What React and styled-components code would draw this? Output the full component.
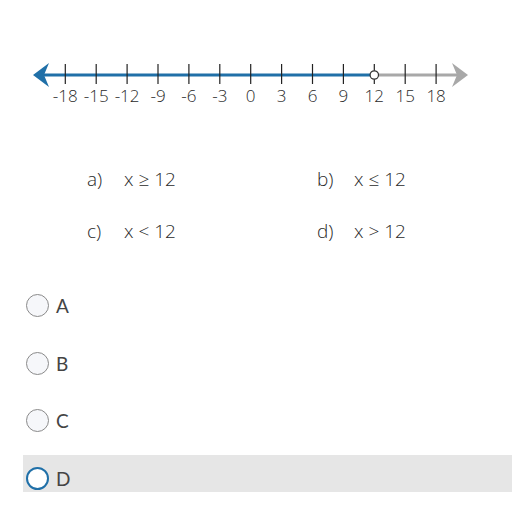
import React from 'react';
import styled, { createGlobalStyle } from 'styled-components';

const GlobalStyle = createGlobalStyle`
  body {
    margin: 0;
    background: #fff;
    font-family: "Open Sans", "DejaVu Sans", sans-serif;
    color: #333;
  }
`;

const BLUE = '#2070a8';
const GREY = '#a8a8a8';

const tickX = (v) => 250.7 + 30.9 * (v / 3);

const NumberLine = () => {
    const values = [-18, -15, -12, -9, -6, -3, 0, 3, 6, 9, 12, 15, 18];
    return (
        <LineSvg width="512" height="120" viewBox="0 0 512 120">
            <line x1="44" y1="75" x2={tickX(12)} y2="75" stroke={BLUE} strokeWidth="3" />
            <line x1={tickX(12)} y1="75" x2="458" y2="75" stroke={GREY} strokeWidth="3" />
            <path d="M33 75 L49 63 L44 75 L49 87 Z" fill={BLUE} />
            <path d="M468 75 L452 63 L457 75 L452 87 Z" fill={GREY} />
            {values.map((v) => (
                <g key={v}>
                    <line x1={tickX(v)} y1="64" x2={tickX(v)} y2="84" stroke="#222" strokeWidth="1.2" />
                    <TickLabel x={tickX(v)} y="102" textAnchor="middle">
                        {v < 0 ? `-${-v}` : v}
                    </TickLabel>
                </g>
            ))}
            <circle cx={tickX(12)} cy="75" r="4.2" fill="#fff" stroke="#333" strokeWidth="1.2" />
        </LineSvg>
    );
};

const App = () => {
    const choices = [
        { key: 'a)', text: 'x ≥ 12' },
        { key: 'b)', text: 'x ≤ 12' },
        { key: 'c)', text: 'x < 12' },
        { key: 'd)', text: 'x > 12' },
    ];
    const answers = ['A', 'B', 'C', 'D'];

    return (
        <Page>
            <GlobalStyle />
            <NumberLine />
            <Choices>
                {choices.map((c) => (
                    <Choice key={c.key}>
                        <ChoiceKey>{c.key}</ChoiceKey>
                        <span>{c.text}</span>
                    </Choice>
                ))}
            </Choices>
            <Answers>
                {answers.map((a) => (
                    <Answer key={a} selected={a === 'D'}>
                        <Radio selected={a === 'D'} />
                        <AnswerLabel>{a}</AnswerLabel>
                    </Answer>
                ))}
            </Answers>
        </Page>
    );
};

const Page = styled.div`
    width: 512px;
    height: 510px;
    overflow: hidden;
`;

const LineSvg = styled.svg`
    display: block;
`;

const TickLabel = styled.text`
    font-family: "Open Sans", sans-serif;
    font-size: 17px;
    font-weight: 300;
    fill: #2a2a2a;
`;

const Choices = styled.div`
    display: grid;
    grid-template-columns: 230px 230px;
    row-gap: 28px;
    padding-left: 87px;
    margin-top: 47px;
`;

const Choice = styled.div`
    display: flex;
    font-size: 19px;
    font-weight: 300;
    line-height: 24px;
    color: #2a2a2a;
`;

const ChoiceKey = styled.span`
    width: 37px;
`;

const Answers = styled.div`
    display: flex;
    flex-direction: column;
    gap: 20.5px;
    margin-top: 39px;
    margin-left: 23px;
`;

const Answer = styled.div`
    display: flex;
    align-items: center;
    gap: 7px;
    height: 37px;
    box-sizing: border-box;
    padding: 12px 0 2px 3px;
    background: ${(p) => (p.selected ? '#e6e6e6' : 'transparent')};
`;

const Radio = styled.span`
    width: 23px;
    height: 23px;
    box-sizing: border-box;
    border-radius: 50%;
    border: ${(p) => (p.selected ? `2px solid ${BLUE}` : '1px solid #8a8a8a')};
    background: ${(p) => (p.selected ? '#fff' : '#f6f7fa')};
    flex-shrink: 0;
`;

const AnswerLabel = styled.span`
    font-family: Lato, "Open Sans", sans-serif;
    font-size: 19px;
    color: #444;
`;

export default App;
